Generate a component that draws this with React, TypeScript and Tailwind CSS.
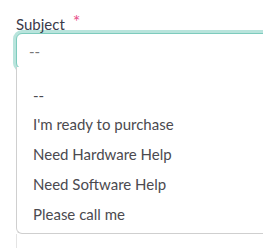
import React from 'react';

const options = ['--', "I'm ready to purchase", 'Need Hardware Help', 'Need Software Help', 'Please call me'];

export default function App() {
  return (
    <div className="w-[263px] h-[248px] overflow-hidden bg-white" style={{ fontFamily: 'Lato, "Noto Sans", sans-serif' }}>
      <div className="pl-4 pt-[14px] w-[300px]">
        {/* Label */}
        <div className="flex items-start h-[19px] text-[15px] leading-[20px] text-[#3a3a4a]">
          <span>Subject</span>
          <span className="ml-[8px] text-[#e8508a] text-[18px] leading-[14px]">*</span>
        </div>

        {/* Focused select input */}
        <div className="h-[36px] rounded-[6px] border border-[#7dcbbd] ring-[3px] ring-[#b8e4dc] bg-white flex items-center pl-[12px] text-[15px] text-[#777]">
          --
        </div>

        {/* Options list */}
        <div className="border-l border-b border-[#cfcfcf] rounded-bl-[6px] pt-[13px] pb-[4px] -mt-[2px] bg-white">
          {options.map((opt) => (
            <div key={opt} className="h-[29.75px] flex items-center pl-[16px] text-[15px] text-[#4b4a4f]">
              {opt}
            </div>
          ))}
        </div>
        <div className="h-[20px] border-l border-[#e4e4e4]"></div>
      </div>
    </div>
  );
}
